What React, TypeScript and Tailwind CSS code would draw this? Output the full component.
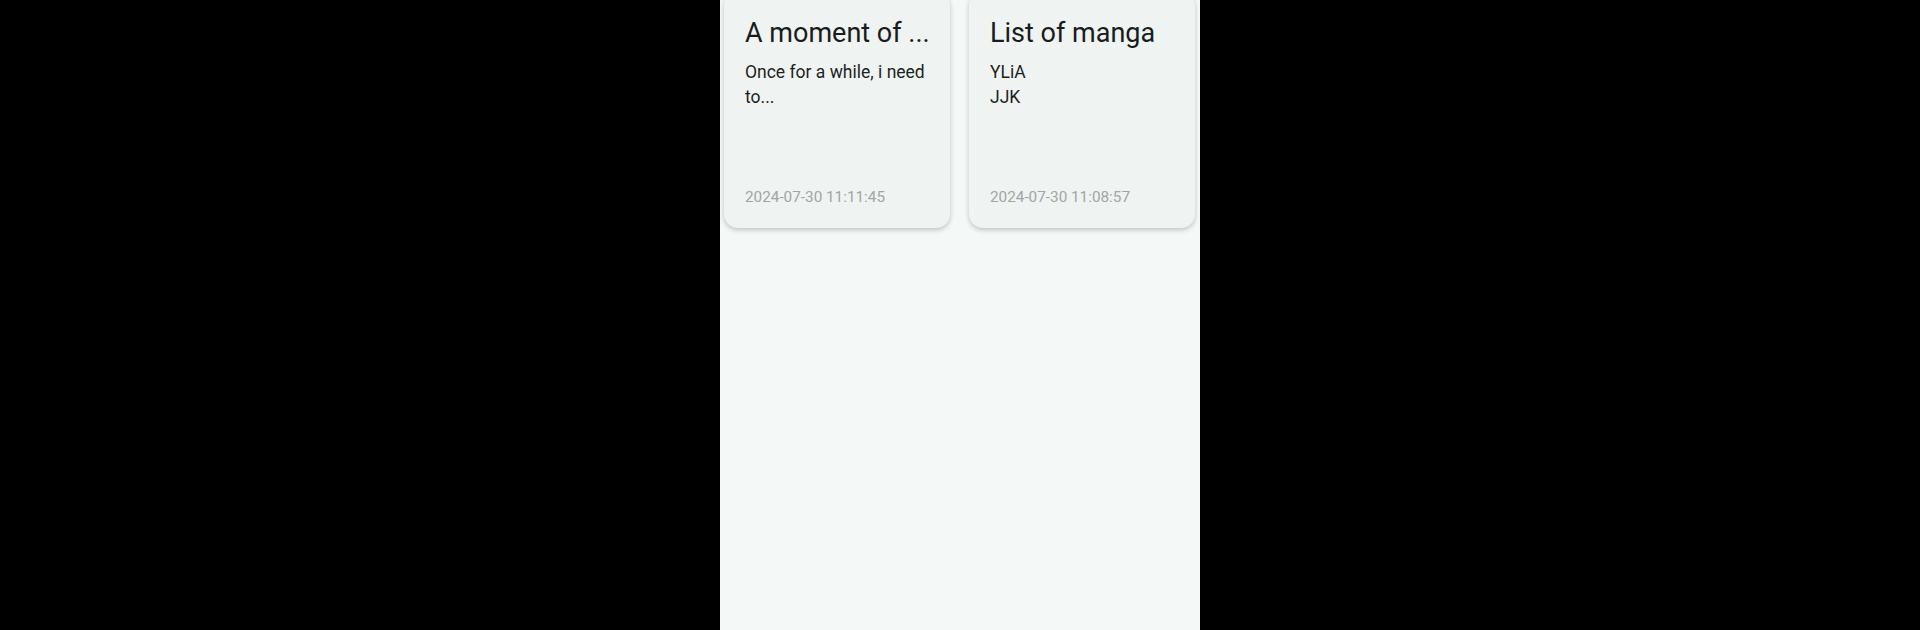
const notes = [
  {
    title: "A moment of ...",
    body: ["Once for a while, i need", "to..."],
    date: "2024-07-30 11:11:45",
  },
  {
    title: "List of manga",
    body: ["YLiA", "JJK"],
    date: "2024-07-30 11:08:57",
  },
];

function NoteCard({ note }: { note: (typeof notes)[number] }) {
  return (
    <div className="flex h-[236px] flex-col rounded-[14px] bg-[#eff3f2] px-[21px] pt-[24px] pb-[22px] shadow-[0_2px_5px_rgba(0,0,0,0.22)]">
      <h2 className="whitespace-nowrap text-[27px] leading-[34px] text-[#191c1b]">{note.title}</h2>
      <div className="mt-[10px] text-[17.5px] leading-[25px] text-[#1d1f1e]">
        {note.body.map((line) => (
          <p key={line} className="whitespace-nowrap">
            {line}
          </p>
        ))}
      </div>
      <p className="mt-auto text-[15.3px] leading-[18px] text-[#a2a6a4]">{note.date}</p>
    </div>
  );
}

export default function App() {
  return (
    <div className="flex h-[630px] w-full justify-center overflow-hidden bg-black font-['Roboto',sans-serif]">
      <div className="h-full w-[480px] bg-[#f4f9f7]">
        <div className="-mt-[8px] grid grid-cols-2 gap-[19px] pl-[4px] pr-[5px]">
          {notes.map((n) => (
            <NoteCard key={n.title} note={n} />
          ))}
        </div>
      </div>
    </div>
  );
}
